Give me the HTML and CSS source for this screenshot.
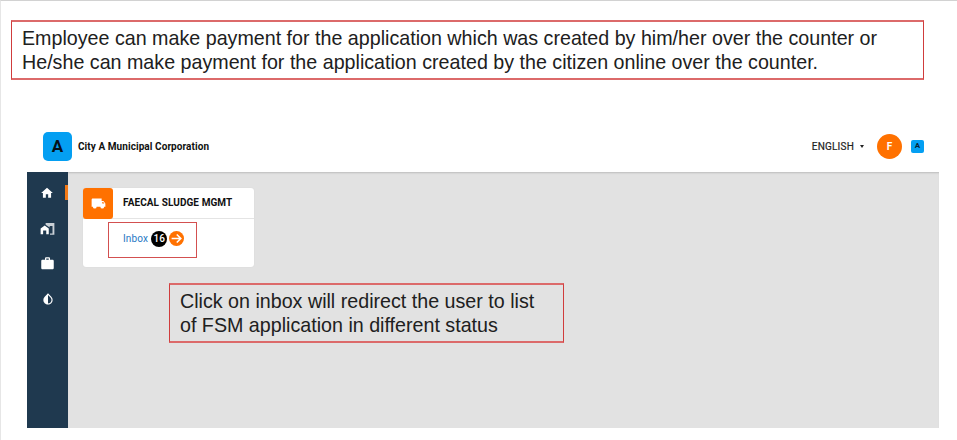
FILE: index.html
```html
<!DOCTYPE html>
<html lang="en">
<head>
<meta charset="utf-8">
<title>City A Municipal Corporation</title>
<link rel="stylesheet" href="styles.css">
</head>
<body>
<div class="note note-top"><div>Employee can make payment for the application which was created by him/her over the counter or</div><div>He/she can make payment for the application created by the citizen online over the counter.</div></div>
<div class="app">
  <header class="topbar">
    <span class="logo">A</span>
    <span class="city">City A Municipal Corporation</span>
    <span class="lang">ENGLISH</span>
    <span class="caret"></span>
    <span class="avatar">F</span>
    <span class="mini">A</span>
  </header>
  <div class="body">
    <nav class="side">
      <span class="item active"><svg class="home" viewBox="0 0 24 24"><path d="M10 20v-6h4v6h5v-8h3L12 3 2 12h3v8z"/></svg></span>
      <span class="item"><svg class="work" viewBox="0 0 24 24"><path d="M1 12v9h4v-6h5v6h4V12L7.500 7z"/><path class="pale" d="M9 3v3l6.500 4.500V8H20v12h-4v2h7V3z"/></svg></span>
      <span class="item"><svg class="bag" viewBox="0 0 24 24"><path d="M20 6h-4V4c0-1.110-.89-2-2-2h-4c-1.110 0-2 .89-2 2v2H4c-1.110 0-1.990.89-1.990 2L2 19c0 1.110.89 2 2 2h16c1.110 0 2-.89 2-2V8c0-1.110-.89-2-2-2zm-6 0h-4V4h4v2z"/></svg></span>
      <span class="item"><svg class="drop" viewBox="0 0 24 24"><path d="M17.660 7.930L12 2.270 6.340 7.930c-3.120 3.120-3.120 8.190 0 11.310C7.900 20.800 9.950 21.580 12 21.580c2.050 0 4.100-.78 5.660-2.340 3.120-3.120 3.120-8.190 0-11.310zM12 19.590V5.100l4.240 4.250c1.140 1.140 1.760 2.640 1.760 4.240s-.62 3.100-1.760 4.240C15.110 18.970 13.600 19.590 12 19.590z" fill-rule="evenodd"/></svg></span>
    </nav>
    <main class="main">
      <section class="card">
        <div class="card-head">
          <span class="tile"><svg viewBox="0 0 24 24"><path d="M1 6c0-1.100.9-2 2-2h14v4h3l3 4v5h-2a3 3 0 0 1-6 0H9a3 3 0 0 1-6 0H1zM18 9.500v2.500h3.460L19.500 9.500z" fill-rule="evenodd"/></svg></span>
          <span class="title">FAECAL SLUDGE MGMT</span>
        </div>
        <div class="inbox">
          <span class="link">Inbox</span>
          <span class="count">16</span>
          <svg class="go" viewBox="0 0 16 16"><circle cx="8" cy="8" r="8"/><path d="M2.800 8h9.700M8.300 3.700 12.600 8l-4.300 4.300"/></svg>
        </div>
      </section>
      <div class="note note-mid"><div>Click on inbox will redirect the user to list</div><div>of FSM application in different status</div></div>
    </main>
  </div>
</div>
</body>
</html>
```
FILE: styles.css
```css
* { box-sizing: border-box; }
body {
  margin: 0;
  height: 440px;
  overflow: hidden;
  background: #fff;
  border-top: 1px solid #d2d2d2;
  border-left: 1px solid #e6e6e6;
  font-family: Roboto, sans-serif;
}
.note {
  border: 2px solid #dc6a6a;
  border-left-width: 1px;
  border-right-width: 1px;
  border-left-color: #d03c3c;
  border-right-color: #d03c3c;
  color: #202020;
  font: 19.680px/24px "Liberation Sans", Arial, sans-serif;
  white-space: nowrap;
}
.note-top { width: 913px; height: 60px; margin: 19px 0 0 10px; padding: 4px 0 0 10px; }
.app { width: 912px; height: 308px; margin: 40px 0 0 26px; }
.topbar { display: flex; align-items: center; height: 52px; padding: 0 15px 0 16px; }
.logo {
  width: 29px; height: 29px; margin: 1px 6px 0 0; border-radius: 5px;
  background: #049ff2; color: #061018;
  font-size: 17px; font-weight: 700; line-height: 28px; text-align: center;
}
.city { color: #111; font-size: 10px; font-weight: 700; letter-spacing: 0.070px; }
.lang { margin-left: auto; color: #222; font-size: 10px; letter-spacing: 0.200px; -webkit-text-stroke: 0.200px #222; }
.caret { margin: 1px 13px 0 6px; border: 2.500px solid transparent; border-top: 3px solid #222; border-bottom: 0; }
.avatar {
  width: 25px; height: 25px; margin-right: 9px; border-radius: 50%;
  background: #ff7100; color: #fff;
  font-size: 10px; font-weight: 700; line-height: 25px; text-align: center;
}
.mini {
  width: 13px; height: 13px; margin-top: 1px; border-radius: 2px; background: #049ff2; color: #082438;
  font-size: 8px; font-weight: 700; line-height: 12px; text-align: center;
}
.body { display: flex; height: 256px; }
.side { width: 41px; padding-top: 3px; background: #1f394f; }
.item { display: flex; align-items: center; justify-content: center; height: 35.500px; }
.active { background: linear-gradient(#f47a16, #f47a16) right 10px / 3px 15px no-repeat; }
.side svg { width: 14px; height: 14px; fill: #fff; }
.side .home { margin-right: 1px; }
.side .work, .side .bag { width: 15px; height: 15px; }
.side .pale { fill: #c9d0d6; }
.main { flex: 1; padding: 16px 0 0 15px; background: #e2e2e2; box-shadow: inset 0 2px 2px -1px #bcbcbc; }
.card { width: 171px; height: 79px; border-radius: 3px; background: #fff; box-shadow: 0 0 1px #ccc; }
.card-head { display: flex; align-items: center; height: 31px; border-bottom: 1px solid #e4e4e4; }
.tile {
  display: flex; align-items: center; justify-content: center;
  width: 30px; height: 31px; margin-right: 10px; border-radius: 3px; background: #ff7100;
}
.tile svg { width: 15px; height: 15px; fill: #fff; }
.title { padding-bottom: 2px; color: #111; font-size: 10px; font-weight: 700; letter-spacing: 0.080px; white-space: nowrap; }
.inbox {
  display: flex; align-items: center; width: 89px; height: 36px;
  margin: 3px 0 0 25px; padding: 0 0 3px 14px; border: 1.500px solid #d35050;
}
.link { color: #1f78c4; font-size: 10px; letter-spacing: 0.150px; }
.count {
  width: 16px; height: 16px; margin: 0 2px 0 3px; border-radius: 50%;
  background: #000; color: #fff; font-size: 10px; font-weight: 500; line-height: 16px; text-align: center;
}
.go { width: 15px; height: 15px; fill: #ff7100; }
.go path { fill: none; stroke: #fff; stroke-width: 1.700; }
.note-mid { width: 395px; height: 60px; margin: 16px 0 0 86px; padding: 4px 0 0 10px; }
```
